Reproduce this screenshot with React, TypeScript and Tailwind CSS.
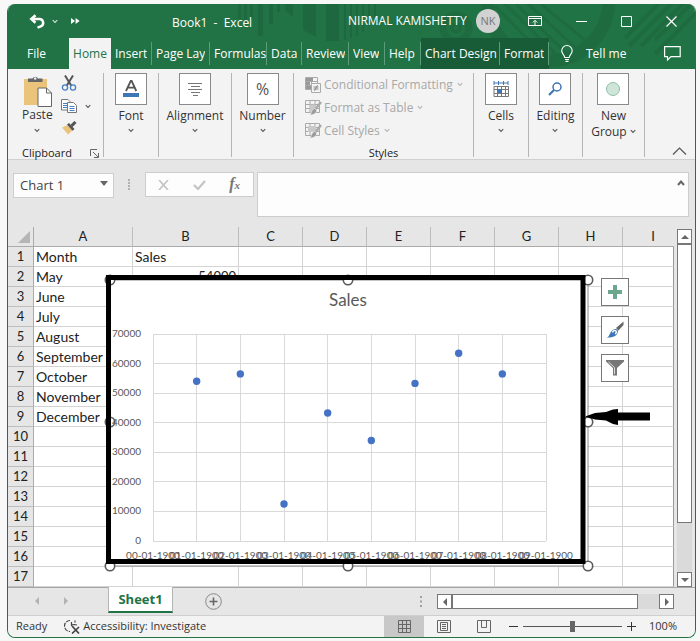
import React, { useState } from 'react'
import clsx from 'clsx'

interface Tab {
    label: string
    width: string
    divider?: boolean
    contextual?: boolean
}

const TABS: Tab[] = [
    { label: 'File', width: 'w-[61px] pr-1' },
    { label: 'Home', width: 'w-[42px]' },
    { label: 'Insert', width: 'w-[41px]', divider: true },
    { label: 'Page Layout', width: 'w-[58px]', divider: true },
    { label: 'Formulas', width: 'w-[57px]', divider: true },
    { label: 'Data', width: 'w-[35px]', divider: true },
    { label: 'Review', width: 'w-[47px]', divider: true },
    { label: 'View', width: 'w-[36px]', divider: true },
    { label: 'Help', width: 'w-[36px]', divider: true },
    { label: 'Chart Design', width: 'w-[79px]', divider: true, contextual: true },
    { label: 'Format', width: 'w-[49px]', divider: true, contextual: true },
]

const COLUMNS = ['A', 'B', 'C', 'D', 'E', 'F', 'G', 'H', 'I']

const MONTHS = ['May', 'June', 'July', 'August', 'September', 'October', 'November', 'December']
const SALES = [54000, 56500, 12500, 43300, 34000, 53300, 63500, 56500]

const ROWS = Array.from({ length: 17 }, (_, i) => i + 1)

const cellValue = (column: string, row: number): string => {
    if (row === 1) return column === 'A' ? 'Month' : column === 'B' ? 'Sales' : ''
    const index = row - 2
    if (column === 'A') return MONTHS[index] ?? ''
    if (column === 'B' && SALES[index]) return String(SALES[index])
    return ''
}

const Chevron = ({ className = '' }: { className?: string }) => (
    <svg viewBox="0 0 8 6" className={clsx('h-[5px] w-[6px] opacity-80', className)} fill="none" stroke="currentColor" strokeWidth="1.5">
        <path d="M1 1.2 4 4.2 7 1.2" />
    </svg>
)

const TitleDecoration = () => (
    <svg
        viewBox="0 0 688 65"
        preserveAspectRatio="xMaxYMin slice"
        className="pointer-events-none absolute inset-0 h-full w-full"
        aria-hidden="true"
    >
        <g fill="#1c6239" opacity="0.6">
            <path d="M231 0h3v15h-3zM237 0h3v21h-3zM243 0h3v15h-3zM251 0h5v32h-5zM262 0h4v20h-4zM270 0h3v8h-3z" />
            <path d="M278 0h8v13l-8-7zM296 0h13v33l-13-7zM319 0h13v37h-13z" />
            <path d="M337 0h2v36h-2zM343 0h2v34h-2zM349 0h2v32h-2zM355 0h2v28h-2zM361 0h2v22h-2zM367 0h2v14h-2z" />
        </g>
        <g fill="none" stroke="#1c6239" opacity="0.45">
            <circle cx="449" cy="24" r="13" strokeWidth="7" />
            <circle cx="449" cy="24" r="4" strokeWidth="4" />
            <circle cx="541" cy="-4" r="61" strokeWidth="13" />
            <path d="M488 2 545 60M498 0 556 57M509 0 562 52M521 0 570 45M534 0 578 36" strokeWidth="3" />
            <path d="M618 34 653-2M622 42 667-3M634 42 680-4M648 36 688-4M648 50 690 8" strokeWidth="4" />
        </g>
    </svg>
)

const TitleBar = () => (
    <header className="relative flex h-[34px] items-center pl-[21px] pr-[18px] text-white">
        <button type="button" aria-label="Undo">
            <svg viewBox="0 0 16 15" className="h-[15px] w-[16px]" fill="none" stroke="currentColor" strokeWidth="2.500">
                <path d="M6.500 1.300 2.300 5l4.200 3.700" />
                <path d="M3 5h7.200a3.800 3.800 0 0 1 1.600 7.300L8.500 13.700" />
            </svg>
        </button>
        <button type="button" aria-label="Undo history" className="ml-[7px]">
            <Chevron />
        </button>
        <button type="button" aria-label="More commands" className="ml-[13px]">
            <svg viewBox="0 0 9 6" className="h-[6px] w-[9px]" fill="currentColor">
                <path d="M0 0v6l4-3zM4.600 0v6l4-3z" />
            </svg>
        </button>
        <h1 className="ml-[92px] w-[176px] whitespace-pre pt-1 text-xs">Book1  -  Excel</h1>
        <span className="text-xs">NIRMAL KAMISHETTY</span>
        <div className="flex-1" />
        <span className="grid size-6 place-items-center rounded-full bg-[#d2d2d2] text-[11px] text-[#777]">NK</span>
        <button type="button" aria-label="Ribbon display options" className="ml-7">
            <svg viewBox="0 0 14 10" className="h-[10px] w-[14px]" fill="none" stroke="currentColor">
                <path d="M.5.5h13v9H.5zM.5 2.500h13M7 9V4.500M4.800 6.500 7 4.300l2.200 2.200" />
            </svg>
        </button>
        <button type="button" aria-label="Minimize" className="ml-[34px]">
            <svg viewBox="0 0 11 11" className="size-[11px]" stroke="currentColor">
                <path d="M0 5.500h11" />
            </svg>
        </button>
        <button type="button" aria-label="Maximize" className="ml-[34px]">
            <svg viewBox="0 0 11 11" className="size-[11px]" fill="none" stroke="currentColor">
                <path d="M.5.5h10v10H.5z" />
            </svg>
        </button>
        <button type="button" aria-label="Close" className="ml-[34px]">
            <svg viewBox="0 0 11 11" className="size-[11px]" fill="none" stroke="currentColor" strokeWidth="1.200">
                <path d="M.5.5l10 10M10.500.5l-10 10" />
            </svg>
        </button>
    </header>
)

interface RibbonTabsProps {
    active: string
    onSelect: (label: string) => void
}

const RibbonTabs: React.FC<RibbonTabsProps> = ({ active, onSelect }) => (
    <nav className="relative flex h-[31px] text-xs text-white">
        {TABS.map((tab) => (
            <button
                key={tab.label}
                type="button"
                onClick={() => onSelect(tab.label)}
                className={clsx(
                    'flex shrink-0 items-center',
                    tab.width,
                    tab.contextual && 'bg-[#185c37]',
                    active === tab.label && 'bg-[#f3f3f3] text-[#217346]'
                )}
            >
                <span
                    className={clsx(
                        'flex h-[23px] w-full items-center overflow-hidden whitespace-nowrap',
                        tab.divider ? 'border-r border-[#5d9c7a] pl-1' : 'justify-center',
                        tab.label === 'Page Layout' && 'pr-1'
                    )}
                >
                    <span className="overflow-hidden">{tab.label}</span>
                </span>
            </button>
        ))}
        <button type="button" className="ml-3 flex items-center gap-[13px]">
            <svg viewBox="0 0 12 17" className="h-[17px] w-[12px]" fill="none" stroke="currentColor" strokeWidth="1.100">
                <path d="M3.700 12.500c0-2.500-3-3.500-3-6.700a5.200 5.200 0 0 1 10.500 0c0 3.200-3 4.200-3 6.700zM4 14.500h4M4.500 16.400h3" />
            </svg>
            Tell me
        </button>
        <button type="button" aria-label="Comments" className="ml-auto mr-[14px]">
            <svg viewBox="0 0 17 15" className="h-[15px] w-[17px]" fill="none" stroke="currentColor" strokeWidth="1.200">
                <path d="M.6.6h15.600v10H7L3.500 14v-3.400H.6z" />
            </svg>
        </button>
    </nav>
)

interface BigButtonProps {
    label: string
    width: string
    children: React.ReactNode
}

const BigButton: React.FC<BigButtonProps> = ({ label, width, children }) => (
    <div className={clsx('flex h-[84px] shrink-0 justify-center border-r border-[#b5b5b5]', width)}>
        <button type="button" className="flex flex-col items-center">
            <span className="mb-[3px] grid size-8 place-items-center border border-[#8a8a8a] bg-white">{children}</span>
            <span className="text-xs leading-4">{label}</span>
            <Chevron className="mt-1" />
        </button>
    </div>
)

const PasteIcon = () => (
    <svg viewBox="0 0 29 31" className="h-[31px] w-[29px]">
        <path d="M1 3h23v26H1z" fill="#ebc47c" />
        <path d="M5 6V2.500h4.500a3 3 0 0 1 5.500 0h4.500V6z" fill="#666" />
        <circle cx="12.200" cy="2.500" r="1.200" fill="#f3f3f3" />
        <path d="M15 12h8.500l5 5v13.500H15z" fill="#fff" stroke="#666" />
        <path d="M23.500 12v5h5" fill="none" stroke="#666" />
    </svg>
)

const CutIcon = () => (
    <svg viewBox="0 0 16 16" className="size-4" fill="none">
        <path d="M4 0.500 10.500 11M12 0.500 5.500 11" stroke="#555" strokeWidth="2" />
        <circle cx="4" cy="12.500" r="2.600" stroke="#4a7fc0" strokeWidth="1.300" />
        <circle cx="12" cy="12.500" r="2.600" stroke="#4a7fc0" strokeWidth="1.300" />
    </svg>
)

const CopyIcon = () => (
    <svg viewBox="0 0 16 14" className="h-[14px] w-[16px]" fill="#fff" stroke="#777">
        <path d="M.5.5h6.500l2 2v8.500H.5z" />
        <path d="M2 4.500h4M2 6.500h4M2 8.500h4" stroke="#4a7fc0" />
        <path d="M6.500 3.500h6l3 3v7h-9z" />
        <path d="M8.500 7.500h5M8.500 9.500h5M8.500 11.500h5" stroke="#4a7fc0" />
    </svg>
)

const FormatPainterIcon = () => (
    <svg viewBox="0 0 16 14" className="h-[14px] w-[16px]">
        <path d="M1 6.500 6.500 4l5 5.500L7 13.500z" fill="#ebc47c" />
        <path d="m6 3.500 2-1.500 5.500 6-2 1.700z" fill="#555" />
        <path d="m10.500 4.800 4-3.800" stroke="#555" strokeWidth="3" />
    </svg>
)

const StyleIcon = ({ kind }: { kind: string }) => (
    <svg viewBox="0 0 17 16" className="h-[16px] w-[17px]" fill="none" stroke="#aaa">
        {kind === 'conditional' ? (
            <>
                <path d="M.5.5h12v12H.5zM.5 4.500h12M.5 8.500h12M6.500.5v12" />
                <path d="M1 1h7v3H1zM1 5h4v3H1zM1 9h5v3H1z" fill="#999" stroke="none" />
                <path d="M6.500 6.500h9v9h-9z" fill="#f3f3f3" />
                <path d="M8.500 10h5M8.500 12h5M12.500 8.300l-3 5.500" stroke="#888" />
            </>
        ) : (
            <>
                <path d="M.5.5h14v12H.5zM.5 4.500h14M.5 8.500h14M5 .5v12M10 .5v12" />
                <path d={kind === 'table' ? 'M5 4.500h5v8H5z' : 'M3 3h8v6H3z'} fill="#c9c9c9" stroke="none" />
                <path d="m16 2-5.500 7" strokeWidth="2.500" />
                <path d="M10 8.500c2 1 2 3 .5 4.500-1.500 1.600-4 2-6 1.800 2-.8 1.500-2.300 2.500-4 .7-1.300 1.800-2.300 3-2.300z" fill="#9a9a9a" stroke="#f3f3f3" strokeWidth=".5" />
            </>
        )}
    </svg>
)

const Ribbon = () => (
    <section className="flex h-[91px] border-b border-[#d0d0d0] bg-[#f3f3f3] pt-1 text-[#333]" aria-label="Ribbon">
        <div className="flex h-[84px] w-[96px] shrink-0 flex-col border-r border-[#b5b5b5] pl-[14px]">
            <div className="flex h-[73px] shrink-0">
                <button type="button" className="flex flex-col items-center">
                    <span className="mt-[3px]">
                        <PasteIcon />
                    </span>
                    <span className="text-xs leading-4">Paste</span>
                    <Chevron className="mt-[5px]" />
                </button>
                <div className="ml-2 mt-[2px] flex flex-col gap-2">
                    <button type="button" aria-label="Cut" className="self-start">
                        <CutIcon />
                    </button>
                    <div className="flex items-center gap-2">
                        <button type="button" aria-label="Copy">
                            <CopyIcon />
                        </button>
                        <button type="button" aria-label="Copy options">
                            <Chevron />
                        </button>
                    </div>
                    <button type="button" aria-label="Format painter" className="self-start">
                        <FormatPainterIcon />
                    </button>
                </div>
            </div>
            <div className="flex items-center justify-between pr-1 text-[11px] leading-[14px] text-[#222]">
                Clipboard
                <button type="button" aria-label="Clipboard options">
                    <svg viewBox="0 0 9 9" className="size-[9px]" fill="none" stroke="#666">
                        <path d="M.5 7V.5H7M3 3l5 5M8.500 4v4.500H4" />
                    </svg>
                </button>
            </div>
        </div>
        <BigButton label="Font" width="w-[55px]">
            <svg viewBox="0 0 18 18" className="size-[18px]">
                <path d="M4 11 8.800.8h.8L14.300 11M5.800 7.600h6.800" fill="none" stroke="#555" strokeWidth="1.800" />
                <path d="M1 13h16v4H1z" fill="#3f76b5" />
            </svg>
        </BigButton>
        <BigButton label="Alignment" width="w-[73px]">
            <svg viewBox="0 0 14 14" className="size-[14px]" stroke="#777">
                <path d="M0 1.500h14M3 4.500h9M0 7.500h14M3 10.500h9M5 13.500h5" />
            </svg>
        </BigButton>
        <BigButton label="Number" width="w-[62px]">
            <span className="text-base leading-4 text-[#555]">%</span>
        </BigButton>
        <div className="flex h-[84px] w-[180px] shrink-0 flex-col border-r border-[#b5b5b5] pl-[11px] text-[#a8a8a8]">
            <div className="flex h-[73px] shrink-0 flex-col">
                {[
                    ['conditional', 'Conditional Formatting'],
                    ['table', 'Format as Table'],
                    ['cell', 'Cell Styles'],
                ].map(([kind, label]) => (
                    <button key={kind} type="button" className="flex h-[23px] items-center gap-[2px] text-xs">
                        <StyleIcon kind={kind} />
                        <span>{label}</span>
                        <Chevron className="ml-[2px]" />
                    </button>
                ))}
            </div>
            <span className="mr-[11px] text-center text-[11px] leading-[14px] text-[#222]">Styles</span>
        </div>
        <BigButton label="Cells" width="w-[55px]">
            <svg viewBox="0 0 16 17" className="h-[17px] w-[16px]" fill="none" stroke="#777">
                <path d="M1 2h14M1 0v4M5.500 0v4M10.500 0v4M15 0v4" stroke="#3f76b5" />
                <path d="M1 5.500h14.500v10H1zM1 8.500h14M1 12.500h14M4.500 5.500v10M8.500 5.500v10M12.500 5.500v10" />
                <path d="M4 8h5v4H4z" fill="#3f76b5" stroke="none" />
            </svg>
        </BigButton>
        <BigButton label="Editing" width="w-[54px]">
            <svg viewBox="0 0 14 14" className="size-[14px]" fill="none" stroke="#3f76b5">
                <circle cx="9" cy="5" r="4" strokeWidth="1.500" />
                <path d="M6 8 1 13" strokeWidth="2.200" />
            </svg>
        </BigButton>
        <div className="flex h-[84px] w-[62px] shrink-0 justify-center border-r border-[#b5b5b5]">
            <button type="button" className="flex flex-col items-center">
                <span className="mb-[3px] grid size-8 place-items-center border border-[#8a8a8a] bg-white">
                    <span className="size-[14px] rounded-full border border-[#8fbfa5] bg-[#cfe5d9]" />
                </span>
                <span className="text-xs leading-4">
                    New
                    <br />
                    Group <Chevron className="mb-[2px] inline" />
                </span>
            </button>
        </div>
        <button type="button" aria-label="Collapse ribbon" className="mb-[4px] ml-auto mr-[8px] self-end">
            <svg viewBox="0 0 15 8" className="h-[8px] w-[15px]" fill="none" stroke="#555" strokeWidth="1.200">
                <path d="M1 7.500 7.500 1 14 7.500" />
            </svg>
        </button>
    </section>
)

const FormulaBar = () => (
    <section className="flex h-[67px] bg-[#e6e6e6] pl-[5px] pr-[6px] pt-[12px]">
        <div className="relative h-[25px] w-[101px] shrink-0">
            <select
                aria-label="Name box"
                className="h-full w-full appearance-none border border-[#cdcdcd] bg-[#fdfdfd] pl-[6px] text-[13px] text-[#444]"
            >
                <option>Chart 1</option>
            </select>
            <svg viewBox="0 0 8 5" className="pointer-events-none absolute right-[6px] top-[9px] h-[5px] w-[8px]" fill="#666">
                <path d="M0 0h8L4 5z" />
            </svg>
        </div>
        <svg viewBox="0 0 3 11" className="ml-[14px] mt-[7px] h-[11px] w-[3px]" fill="#b0b0b0">
            <path d="M0 0h2v2H0zM0 3h2v2H0zM0 6h2v2H0zM0 9h2v2H0z" />
        </svg>
        <div className="ml-[14px] flex h-[25px] w-[109px] shrink-0 items-center justify-between border border-[#cdcdcd] bg-[#fdfdfd] pl-[12px] pr-[13px]">
            <button type="button" aria-label="Cancel">
                <svg viewBox="0 0 11 10" className="h-[10px] w-[11px]" stroke="#c4c4c4" strokeWidth="1.700">
                    <path d="m1 0 9 10M10 0 1 10" />
                </svg>
            </button>
            <button type="button" aria-label="Enter">
                <svg viewBox="0 0 13 10" className="h-[10px] w-[13px]" fill="none" stroke="#c4c4c4" strokeWidth="2.200">
                    <path d="m1 5 4 4 7-8" />
                </svg>
            </button>
            <button type="button" aria-label="Insert function" className="font-['Liberation_Serif',serif] text-base font-bold italic leading-4 text-[#777]">
                f<span className="text-[11px]">x</span>
            </button>
        </div>
        <div className="relative ml-[3px] h-[45px] flex-1">
            <textarea aria-label="Formula" className="block h-full w-full resize-none border border-[#cdcdcd] bg-[#fdfdfd] outline-none" />
            <button type="button" aria-label="Collapse formula bar" className="absolute right-[4px] top-[8px] text-[#666]">
                <svg viewBox="0 0 8 6" className="block h-[6px] w-[8px]" fill="none" stroke="currentColor" strokeWidth="2">
                    <path d="M1 5 4 1.500 7 5" />
                </svg>
            </button>
        </div>
    </section>
)

// plot area geometry, in the chart's own units
const PLOT = { left: 153, right: 546, top: 334, bottom: 541 }
const X_STEP = (PLOT.right - PLOT.left) / 9
const Y_STEP = (PLOT.bottom - PLOT.top) / 7
const HANDLES = [
    [110, 280], [348, 280], [588, 280],
    [110, 422], [588, 422],
    [110, 566], [348, 566], [588, 566],
]

const SalesChart = () => (
    <svg
        viewBox="100 270 552 302"
        className="absolute left-[92px] top-[43px] h-[302px] w-[552px] font-[Lato,sans-serif]"
        role="img"
        aria-label="Sales scatter chart"
    >
        <path d="M110 280h478v286H110z" fill="#fff" stroke="#8a8a8a" />
        <text x="348" y="306" textAnchor="middle" fontSize="17" fill="#595959">Sales</text>
        <g stroke="#d9d9d9">
            {Array.from({ length: 10 }, (_, i) => {
                const x = Math.floor(PLOT.left + i * X_STEP) + 0.5
                return <path key={i} d={`M${x} ${PLOT.top}V${PLOT.bottom}`} />
            })}
            {Array.from({ length: 8 }, (_, i) => {
                const y = Math.floor(PLOT.top + i * Y_STEP) + 0.5
                return <path key={i} d={`M${PLOT.left} ${y}H${PLOT.right}`} />
            })}
        </g>
        {HANDLES.map(([x, y]) => (
            <circle key={`${x}-${y}`} cx={x} cy={y} r="4.700" fill="#fff" stroke="#595959" strokeWidth="1.600" />
        ))}
        <g fill="#595959">
            {Array.from({ length: 8 }, (_, i) => (
                <text key={i} x="141" y={PLOT.bottom - i * Y_STEP + 3} textAnchor="end" fontSize="10">
                    {i * 10000}
                </text>
            ))}
            {Array.from({ length: 10 }, (_, i) => (
                <text key={i} x={PLOT.left + i * X_STEP} y="559" textAnchor="middle" fontSize="10">
                    {`0${i}-01-1900`}
                </text>
            ))}
        </g>
        {SALES.map((value, i) => (
            <circle
                key={i}
                cx={PLOT.left + (i + 1) * X_STEP}
                cy={PLOT.bottom - (value / 10000) * Y_STEP}
                r="3.700"
                fill="#4472c4"
            />
        ))}
        {/* marker frame and arrow */}
        <path d="M108.500 277.500h474.500v284H108.500z" fill="none" stroke="#000" strokeWidth="5" />
        <path d="m585 416.500 10-3.500 11-1 7-2.500 5-.5v3.500h32v8h-32v4.500l-5-1-7-3.500-11-1z" fill="#000" />
    </svg>
)

const ChartTools = () => (
    <div className="absolute left-[593px] top-[51px] flex flex-col gap-[10px]">
        {['Chart elements', 'Chart styles', 'Chart filters'].map((label) => (
            <button key={label} type="button" aria-label={label} className="grid size-7 place-items-center border border-[#777] bg-white">
                <svg viewBox="0 0 18 18" className="size-[18px]">
                    {label === 'Chart elements' && <path d="M7 2h4v5h5v4h-5v5H7v-5H2V7h5z" fill="#6aa78d" />}
                    {label === 'Chart styles' && (
                        <>
                            <path d="m17.500.5-7.500 6.500 2.500 2.500 5-5.500z" fill="#666" />
                            <path d="M10 8c2 .5 2.500 2 1.500 4-1.500 4-7 5-11 4.500 2-.8 2.500-1.500 3.500-4C5 10 7.500 7.500 10 8z" fill="#3f76b5" />
                            <path d="M6.500 11.500c.5-1.800 2.500-2.500 3.500-1.500s0 2.500-1 2.700" fill="none" stroke="#fff" strokeWidth="1.400" />
                        </>
                    )}
                    {label === 'Chart filters' && (
                        <>
                            <path d="M0 1h18v1.500L11 9v7.500H7V9L0 2.500z" fill="#777" />
                            <path d="M2.500 3 8.500 8.500V15" fill="none" stroke="#ddd" />
                        </>
                    )}
                </svg>
            </button>
        ))}
    </div>
)

const Triangle = ({ d }: { d: string }) => (
    <svg viewBox="0 0 8 8" className="size-2" fill="#666">
        <path d={d} />
    </svg>
)

const Sheet = () => (
    <section className="relative flex bg-[#e6e6e6]">
        <table className="w-full table-fixed border-separate border-spacing-0 font-[Lato,sans-serif] text-sm text-[#222]">
            <colgroup>
                <col className="w-[26px]" />
                <col className="w-[99px]" />
                <col className="w-[106px]" />
                <col className="w-[64px]" />
                <col className="w-[64px]" />
                <col className="w-[64px]" />
                <col className="w-[64px]" />
                <col className="w-[64px]" />
                <col className="w-[64px]" />
                <col />
            </colgroup>
            <thead>
                <tr>
                    <th className="h-5 border-b border-r border-[#ababab] p-0" aria-label="Select all">
                        <svg viewBox="0 0 12 12" className="ml-auto mr-[3px] size-3" fill="#b5b5b5">
                            <path d="M12 0v12H0z" />
                        </svg>
                    </th>
                    {COLUMNS.map((column) => (
                        <th
                            key={column}
                            className={clsx(
                                'h-5 border-b border-[#ababab] p-0 text-[13px] font-normal leading-[19px]',
                                column === 'I' ? 'pl-[9px]' : 'border-r border-r-[#bdbdbd]'
                            )}
                        >
                            {column}
                        </th>
                    ))}
                </tr>
            </thead>
            <tbody>
                {ROWS.map((row) => (
                    <tr key={row}>
                        <th className="h-5 border-b border-r border-b-[#bdbdbd] border-r-[#ababab] p-0 text-[13px] font-normal leading-[19px]">{row}</th>
                        {COLUMNS.map((column) => (
                            <td
                                key={column}
                                className={clsx(
                                    'h-5 overflow-hidden border-b border-r border-[#d4d4d4] bg-white px-[2px] py-0 leading-[19px]',
                                    column === 'B' && row > 1 && 'text-right text-[13px]',
                                    column === 'I' && 'border-r-[#9a9a9a]'
                                )}
                            >
                                {cellValue(column, row)}
                            </td>
                        ))}
                    </tr>
                ))}
            </tbody>
        </table>
        <div className="ml-[3px] mr-[3px] mt-[2px] flex w-[15px] shrink-0 flex-col bg-[#dadada]">
            <button type="button" aria-label="Scroll up" className="grid h-[15px] place-items-center border border-[#777] bg-white">
                <Triangle d="M0 6h8L4 2z" />
            </button>
            <div className="h-[279px] border border-[#777] bg-white" />
            <button type="button" aria-label="Scroll down" className="mt-auto grid h-[15px] place-items-center border border-[#777] bg-white">
                <Triangle d="M0 2h8L4 6z" />
            </button>
        </div>
        <SalesChart />
        <ChartTools />
    </section>
)

const SheetTabs = () => (
    <section className="flex h-7 border-t border-[#a6a6a6] bg-[#e6e6e6]">
        <div className="flex w-[99px] shrink-0 items-center gap-[21px] pb-[2px] pl-[25px] opacity-40">
            <button type="button" aria-label="Previous sheet">
                <Triangle d="M6 0v8L2 4z" />
            </button>
            <button type="button" aria-label="Next sheet">
                <Triangle d="M2 0v8l4-4z" />
            </button>
        </div>
        <button
            type="button"
            className="-mt-px ml-px h-[26px] w-[65px] border-x border-b-2 border-x-[#b5b5b5] border-b-[#217346] bg-white text-[13px] font-bold leading-6 text-[#217346]"
        >
            Sheet1
        </button>
        <button type="button" aria-label="New sheet" className="ml-8">
            <svg viewBox="0 0 17 17" className="size-[17px]" fill="none" stroke="#888">
                <circle cx="8.500" cy="8.500" r="7.800" />
                <path d="M8.500 4.500v8M4.500 8.500h8" stroke="#666" strokeWidth="1.600" />
            </svg>
        </button>
        <div className="flex-1" />
        <svg viewBox="0 0 2 11" className="mt-2 h-[11px] w-[2px]" fill="#a0a0a0">
            <path d="M0 0h2v2H0zM0 4.500h2v2H0zM0 9h2v2H0z" />
        </svg>
        <div className="ml-[15px] mr-[21px] mt-[6px] flex h-[15px] w-[237px] shrink-0 bg-[#dadada]">
            <button type="button" aria-label="Scroll left" className="grid w-[15px] place-items-center border border-[#777] bg-white">
                <Triangle d="M6 0v8L2 4z" />
            </button>
            <div className="w-[186px] border border-[#777] bg-white" />
            <button type="button" aria-label="Scroll right" className="ml-auto grid w-[15px] place-items-center border border-[#777] bg-white">
                <Triangle d="M2 0v8l4-4z" />
            </button>
        </div>
    </section>
)

const StatusBar = () => {
    const [zoom, setZoom] = useState<number>(50)

    return (
        <footer className="flex h-[22px] items-center rounded-b-[7px] border-t border-[#cfcfcf] bg-[#f3f3f3] pl-2 text-[11px] text-[#333]">
            <span>Ready</span>
            <button type="button" className="ml-[17px] flex items-center gap-[3px]">
                <svg viewBox="0 0 16 15" className="h-[15px] w-[16px]" fill="none" stroke="#444" strokeWidth="1.200">
                    <path d="M6 1.500A5.500 5.500 0 0 0 6 12.500" strokeDasharray="4 1.200" />
                    <path d="M7.500 3v4M7 6l3-.5 3 .5M11 1.500v2" />
                    <path d="m8 7 7 7.500M15 8l-7 6.500" strokeWidth="1.700" />
                </svg>
                Accessibility: Investigate
            </button>
            <div className="flex-1" />
            <button type="button" aria-label="Normal view" className="grid h-full w-[40px] place-items-center bg-[#c8c8c8]">
                <svg viewBox="0 0 13 13" className="size-[13px]" fill="none" stroke="#666">
                    <path d="M.5.5h12v12H.5zM.5 4.500h12M.5 8.500h12M4.500.5v12M8.500.5v12" />
                </svg>
            </button>
            <button type="button" aria-label="Page layout view" className="grid h-full w-[40px] place-items-center">
                <svg viewBox="0 0 14 13" className="h-[13px] w-[14px]" fill="none" stroke="#666">
                    <path d="M.5.5h13v12H.5zM3.500 2.500h7v8h-7zM5 4.500h4M5 6.500h4M5 8.500h4" />
                </svg>
            </button>
            <button type="button" aria-label="Page break view" className="grid h-full w-[40px] place-items-center">
                <svg viewBox="0 0 14 13" className="h-[13px] w-[14px]" fill="none" stroke="#666">
                    <path d="M.5.5h13v12H.5zM4.500.5v7h5v-7" />
                </svg>
            </button>
            <button type="button" aria-label="Zoom out" className="ml-[5px]">
                <svg viewBox="0 0 9 9" className="size-[9px]" stroke="#333">
                    <path d="M0 4.500h9" />
                </svg>
            </button>
            <input
                type="range"
                aria-label="Zoom"
                value={zoom}
                onChange={(e: React.ChangeEvent<HTMLInputElement>) => setZoom(Number(e.target.value))}
                className="mx-[5px] h-3 w-[99px] appearance-none bg-transparent [&::-webkit-slider-runnable-track]:h-px [&::-webkit-slider-runnable-track]:bg-[#555] [&::-webkit-slider-thumb]:-mt-[5px] [&::-webkit-slider-thumb]:h-[11px] [&::-webkit-slider-thumb]:w-[5px] [&::-webkit-slider-thumb]:appearance-none [&::-webkit-slider-thumb]:bg-[#666]"
            />
            <button type="button" aria-label="Zoom in">
                <svg viewBox="0 0 9 9" className="size-[9px]" stroke="#333">
                    <path d="M0 4.500h9M4.500 0v9" />
                </svg>
            </button>
            <span className="ml-[13px] mr-[18px]">{zoom * 2}%</span>
        </footer>
    )
}

export default function App() {
    const [activeTab, setActiveTab] = useState<string>('Home')

    return (
        <div className="min-h-screen bg-[#f8f8f8] pb-[3px] pl-[7px] pr-[4px] pt-[4px] font-['Open_Sans',sans-serif]">
            <div className="overflow-hidden rounded-[8px] border border-t-0 border-[#217346] bg-[#f3f3f3]">
                <div className="relative bg-[#217346]">
                    <TitleDecoration />
                    <TitleBar />
                    <RibbonTabs active={activeTab} onSelect={setActiveTab} />
                </div>
                <Ribbon />
                <FormulaBar />
                <Sheet />
                <SheetTabs />
                <StatusBar />
            </div>
        </div>
    )
}
